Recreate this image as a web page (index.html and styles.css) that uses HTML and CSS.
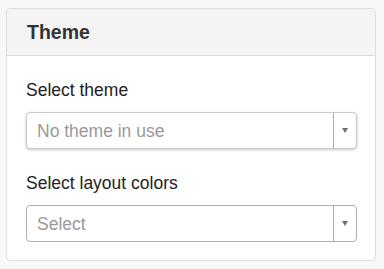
FILE: index.html
```html
<!DOCTYPE html>
<html>
<head>
<meta charset="utf-8">
<link rel="stylesheet" href="styles.css">
</head>
<body>
<div class="card">
  <div class="card-header">Theme</div>
  <div class="card-body">
    <div class="field-label">Select theme</div>
    <div class="select select-active">
      <span class="select-value">No theme in use</span>
      <span class="select-arrow"><span class="tri"></span></span>
    </div>
    <div class="field-label second">Select layout colors</div>
    <div class="select">
      <span class="select-value">Select</span>
      <span class="select-arrow"><span class="tri"></span></span>
    </div>
  </div>
</div>
</body>
</html>
```
FILE: styles.css
```css
html, body {
  margin: 0;
  padding: 0;
}
body {
  background: #f8f8f8;
  font-family: "Liberation Sans", Arial, sans-serif;
  padding: 8px 8px 0 6px;
  color: #333;
}
.card {
  width: 368px;
  background: #fff;
  border: 1px solid #dedede;
  border-radius: 4px;
  overflow: hidden;
}
.card-header {
  height: 46px;
  background: #f4f4f4;
  border-bottom: 1px solid #dcdcdc;
  padding-left: 20px;
  font-size: 19.5px;
  font-weight: bold;
  line-height: 47px;
  color: #333;
}
.card-body {
  padding: 24px 18px 18px 19px;
}
.field-label {
  font-size: 17.5px;
  line-height: 20px;
  color: #222;
  margin-bottom: 12px;
}
.field-label.second {
  margin-top: 24px;
}
.select {
  height: 35px;
  border: 1px solid #b0b0b0;
  border-radius: 4px;
  display: flex;
  align-items: stretch;
  background: #fff;
}
.select-active {
  border-color: #c8c8c8;
  box-shadow: 0 1px 3px rgba(0, 0, 0, 0.22);
}
.select-value {
  flex: 1;
  padding-left: 10px;
  font-size: 17.5px;
  line-height: 36px;
  color: #999;
}
.select-arrow {
  width: 22px;
  border-left: 1px solid #a8a8a8;
  display: flex;
  align-items: center;
  justify-content: center;
}
.tri {
  width: 0;
  height: 0;
  border-left: 3.5px solid transparent;
  border-right: 3.5px solid transparent;
  border-top: 5px solid #707070;
}
```
